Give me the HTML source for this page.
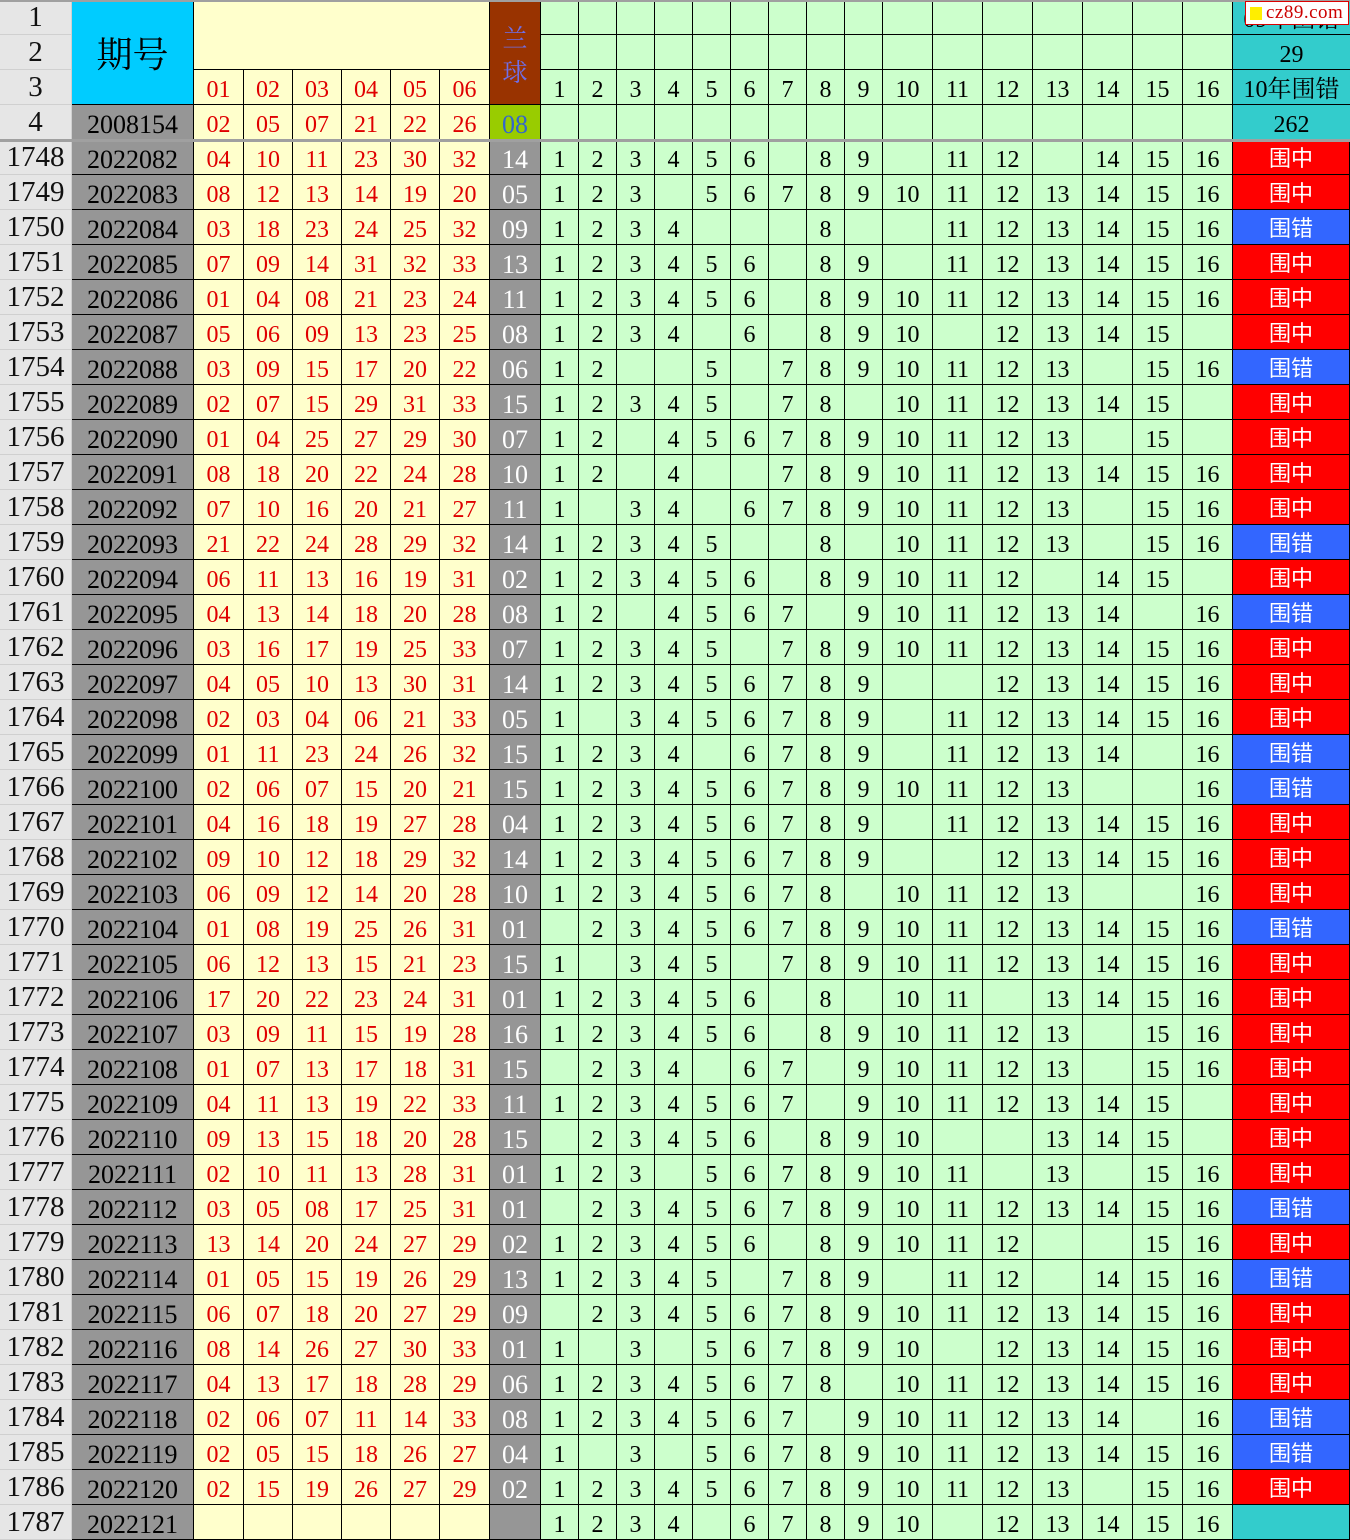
<!DOCTYPE html>
<html><head><meta charset="utf-8"><style>
*{margin:0;padding:0;box-sizing:border-box}
body{width:1350px;height:1540px;overflow:hidden;background:#fff;font-family:"Liberation Serif","Noto Serif CJK SC",serif;position:relative}
.r{display:grid;grid-template-columns:72px 122px 50px 49px 49px 49px 49px 50px 51px repeat(9,38px) repeat(7,50px) 117px;height:35px}
.r>*{display:block;height:35px;border-right:1px solid #000;border-bottom:1px solid #000;text-align:center;font-size:24px;line-height:40px;font-style:normal;font-weight:normal;text-decoration:none;color:#000;overflow:hidden;white-space:nowrap}
s{background:#e6e6e6;border-color:#d0d0d0 !important;font-size:29px !important;line-height:35px !important;color:#111 !important}
u{background:#969696;font-size:26px !important}
i{background:#ffffcc;color:#e00000 !important}
em{background:#969696;color:#fff !important;font-size:26px !important}
a{background:#ccffcc}
b{color:#fff !important;font-family:"Noto Sans CJK SC","Liberation Sans",sans-serif;font-size:22px !important;line-height:34px !important}
b.z{background:#ff0000}
b.c{background:#3366ff}
b.t,.t{background:#33cccc}
.abs{position:absolute}
</style></head><body>
<div class="r"><s>1</s><u></u><i></i><i></i><i></i><i></i><i></i><i></i><em></em><a></a><a></a><a></a><a></a><a></a><a></a><a></a><a></a><a></a><a></a><a></a><a></a><a></a><a></a><a></a><a></a><b class="t"></b></div>
<div class="r"><s>2</s><u></u><i></i><i></i><i></i><i></i><i></i><i></i><em></em><a></a><a></a><a></a><a></a><a></a><a></a><a></a><a></a><a></a><a></a><a></a><a></a><a></a><a></a><a></a><a></a><b class="t"></b></div>
<div class="r"><s>3</s><u></u><i>01</i><i>02</i><i>03</i><i>04</i><i>05</i><i>06</i><em></em><a>1</a><a>2</a><a>3</a><a>4</a><a>5</a><a>6</a><a>7</a><a>8</a><a>9</a><a>10</a><a>11</a><a>12</a><a>13</a><a>14</a><a>15</a><a>16</a><b class="t"></b></div>
<div class="r"><s>4</s><u>2008154</u><i>02</i><i>05</i><i>07</i><i>21</i><i>22</i><i>26</i><em style="background:#99cc00;color:#3366cc !important">08</em><a></a><a></a><a></a><a></a><a></a><a></a><a></a><a></a><a></a><a></a><a></a><a></a><a></a><a></a><a></a><a></a><b class="t"></b></div>
<div class="r"><s>1748</s><u>2022082</u><i>04</i><i>10</i><i>11</i><i>23</i><i>30</i><i>32</i><em>14</em><a>1</a><a>2</a><a>3</a><a>4</a><a>5</a><a>6</a><a></a><a>8</a><a>9</a><a></a><a>11</a><a>12</a><a></a><a>14</a><a>15</a><a>16</a><b class="z">围中</b></div>
<div class="r"><s>1749</s><u>2022083</u><i>08</i><i>12</i><i>13</i><i>14</i><i>19</i><i>20</i><em>05</em><a>1</a><a>2</a><a>3</a><a></a><a>5</a><a>6</a><a>7</a><a>8</a><a>9</a><a>10</a><a>11</a><a>12</a><a>13</a><a>14</a><a>15</a><a>16</a><b class="z">围中</b></div>
<div class="r"><s>1750</s><u>2022084</u><i>03</i><i>18</i><i>23</i><i>24</i><i>25</i><i>32</i><em>09</em><a>1</a><a>2</a><a>3</a><a>4</a><a></a><a></a><a></a><a>8</a><a></a><a></a><a>11</a><a>12</a><a>13</a><a>14</a><a>15</a><a>16</a><b class="c">围错</b></div>
<div class="r"><s>1751</s><u>2022085</u><i>07</i><i>09</i><i>14</i><i>31</i><i>32</i><i>33</i><em>13</em><a>1</a><a>2</a><a>3</a><a>4</a><a>5</a><a>6</a><a></a><a>8</a><a>9</a><a></a><a>11</a><a>12</a><a>13</a><a>14</a><a>15</a><a>16</a><b class="z">围中</b></div>
<div class="r"><s>1752</s><u>2022086</u><i>01</i><i>04</i><i>08</i><i>21</i><i>23</i><i>24</i><em>11</em><a>1</a><a>2</a><a>3</a><a>4</a><a>5</a><a>6</a><a></a><a>8</a><a>9</a><a>10</a><a>11</a><a>12</a><a>13</a><a>14</a><a>15</a><a>16</a><b class="z">围中</b></div>
<div class="r"><s>1753</s><u>2022087</u><i>05</i><i>06</i><i>09</i><i>13</i><i>23</i><i>25</i><em>08</em><a>1</a><a>2</a><a>3</a><a>4</a><a></a><a>6</a><a></a><a>8</a><a>9</a><a>10</a><a></a><a>12</a><a>13</a><a>14</a><a>15</a><a></a><b class="z">围中</b></div>
<div class="r"><s>1754</s><u>2022088</u><i>03</i><i>09</i><i>15</i><i>17</i><i>20</i><i>22</i><em>06</em><a>1</a><a>2</a><a></a><a></a><a>5</a><a></a><a>7</a><a>8</a><a>9</a><a>10</a><a>11</a><a>12</a><a>13</a><a></a><a>15</a><a>16</a><b class="c">围错</b></div>
<div class="r"><s>1755</s><u>2022089</u><i>02</i><i>07</i><i>15</i><i>29</i><i>31</i><i>33</i><em>15</em><a>1</a><a>2</a><a>3</a><a>4</a><a>5</a><a></a><a>7</a><a>8</a><a></a><a>10</a><a>11</a><a>12</a><a>13</a><a>14</a><a>15</a><a></a><b class="z">围中</b></div>
<div class="r"><s>1756</s><u>2022090</u><i>01</i><i>04</i><i>25</i><i>27</i><i>29</i><i>30</i><em>07</em><a>1</a><a>2</a><a></a><a>4</a><a>5</a><a>6</a><a>7</a><a>8</a><a>9</a><a>10</a><a>11</a><a>12</a><a>13</a><a></a><a>15</a><a></a><b class="z">围中</b></div>
<div class="r"><s>1757</s><u>2022091</u><i>08</i><i>18</i><i>20</i><i>22</i><i>24</i><i>28</i><em>10</em><a>1</a><a>2</a><a></a><a>4</a><a></a><a></a><a>7</a><a>8</a><a>9</a><a>10</a><a>11</a><a>12</a><a>13</a><a>14</a><a>15</a><a>16</a><b class="z">围中</b></div>
<div class="r"><s>1758</s><u>2022092</u><i>07</i><i>10</i><i>16</i><i>20</i><i>21</i><i>27</i><em>11</em><a>1</a><a></a><a>3</a><a>4</a><a></a><a>6</a><a>7</a><a>8</a><a>9</a><a>10</a><a>11</a><a>12</a><a>13</a><a></a><a>15</a><a>16</a><b class="z">围中</b></div>
<div class="r"><s>1759</s><u>2022093</u><i>21</i><i>22</i><i>24</i><i>28</i><i>29</i><i>32</i><em>14</em><a>1</a><a>2</a><a>3</a><a>4</a><a>5</a><a></a><a></a><a>8</a><a></a><a>10</a><a>11</a><a>12</a><a>13</a><a></a><a>15</a><a>16</a><b class="c">围错</b></div>
<div class="r"><s>1760</s><u>2022094</u><i>06</i><i>11</i><i>13</i><i>16</i><i>19</i><i>31</i><em>02</em><a>1</a><a>2</a><a>3</a><a>4</a><a>5</a><a>6</a><a></a><a>8</a><a>9</a><a>10</a><a>11</a><a>12</a><a></a><a>14</a><a>15</a><a></a><b class="z">围中</b></div>
<div class="r"><s>1761</s><u>2022095</u><i>04</i><i>13</i><i>14</i><i>18</i><i>20</i><i>28</i><em>08</em><a>1</a><a>2</a><a></a><a>4</a><a>5</a><a>6</a><a>7</a><a></a><a>9</a><a>10</a><a>11</a><a>12</a><a>13</a><a>14</a><a></a><a>16</a><b class="c">围错</b></div>
<div class="r"><s>1762</s><u>2022096</u><i>03</i><i>16</i><i>17</i><i>19</i><i>25</i><i>33</i><em>07</em><a>1</a><a>2</a><a>3</a><a>4</a><a>5</a><a></a><a>7</a><a>8</a><a>9</a><a>10</a><a>11</a><a>12</a><a>13</a><a>14</a><a>15</a><a>16</a><b class="z">围中</b></div>
<div class="r"><s>1763</s><u>2022097</u><i>04</i><i>05</i><i>10</i><i>13</i><i>30</i><i>31</i><em>14</em><a>1</a><a>2</a><a>3</a><a>4</a><a>5</a><a>6</a><a>7</a><a>8</a><a>9</a><a></a><a></a><a>12</a><a>13</a><a>14</a><a>15</a><a>16</a><b class="z">围中</b></div>
<div class="r"><s>1764</s><u>2022098</u><i>02</i><i>03</i><i>04</i><i>06</i><i>21</i><i>33</i><em>05</em><a>1</a><a></a><a>3</a><a>4</a><a>5</a><a>6</a><a>7</a><a>8</a><a>9</a><a></a><a>11</a><a>12</a><a>13</a><a>14</a><a>15</a><a>16</a><b class="z">围中</b></div>
<div class="r"><s>1765</s><u>2022099</u><i>01</i><i>11</i><i>23</i><i>24</i><i>26</i><i>32</i><em>15</em><a>1</a><a>2</a><a>3</a><a>4</a><a></a><a>6</a><a>7</a><a>8</a><a>9</a><a></a><a>11</a><a>12</a><a>13</a><a>14</a><a></a><a>16</a><b class="c">围错</b></div>
<div class="r"><s>1766</s><u>2022100</u><i>02</i><i>06</i><i>07</i><i>15</i><i>20</i><i>21</i><em>15</em><a>1</a><a>2</a><a>3</a><a>4</a><a>5</a><a>6</a><a>7</a><a>8</a><a>9</a><a>10</a><a>11</a><a>12</a><a>13</a><a></a><a></a><a>16</a><b class="c">围错</b></div>
<div class="r"><s>1767</s><u>2022101</u><i>04</i><i>16</i><i>18</i><i>19</i><i>27</i><i>28</i><em>04</em><a>1</a><a>2</a><a>3</a><a>4</a><a>5</a><a>6</a><a>7</a><a>8</a><a>9</a><a></a><a>11</a><a>12</a><a>13</a><a>14</a><a>15</a><a>16</a><b class="z">围中</b></div>
<div class="r"><s>1768</s><u>2022102</u><i>09</i><i>10</i><i>12</i><i>18</i><i>29</i><i>32</i><em>14</em><a>1</a><a>2</a><a>3</a><a>4</a><a>5</a><a>6</a><a>7</a><a>8</a><a>9</a><a></a><a></a><a>12</a><a>13</a><a>14</a><a>15</a><a>16</a><b class="z">围中</b></div>
<div class="r"><s>1769</s><u>2022103</u><i>06</i><i>09</i><i>12</i><i>14</i><i>20</i><i>28</i><em>10</em><a>1</a><a>2</a><a>3</a><a>4</a><a>5</a><a>6</a><a>7</a><a>8</a><a></a><a>10</a><a>11</a><a>12</a><a>13</a><a></a><a></a><a>16</a><b class="z">围中</b></div>
<div class="r"><s>1770</s><u>2022104</u><i>01</i><i>08</i><i>19</i><i>25</i><i>26</i><i>31</i><em>01</em><a></a><a>2</a><a>3</a><a>4</a><a>5</a><a>6</a><a>7</a><a>8</a><a>9</a><a>10</a><a>11</a><a>12</a><a>13</a><a>14</a><a>15</a><a>16</a><b class="c">围错</b></div>
<div class="r"><s>1771</s><u>2022105</u><i>06</i><i>12</i><i>13</i><i>15</i><i>21</i><i>23</i><em>15</em><a>1</a><a></a><a>3</a><a>4</a><a>5</a><a></a><a>7</a><a>8</a><a>9</a><a>10</a><a>11</a><a>12</a><a>13</a><a>14</a><a>15</a><a>16</a><b class="z">围中</b></div>
<div class="r"><s>1772</s><u>2022106</u><i>17</i><i>20</i><i>22</i><i>23</i><i>24</i><i>31</i><em>01</em><a>1</a><a>2</a><a>3</a><a>4</a><a>5</a><a>6</a><a></a><a>8</a><a></a><a>10</a><a>11</a><a></a><a>13</a><a>14</a><a>15</a><a>16</a><b class="z">围中</b></div>
<div class="r"><s>1773</s><u>2022107</u><i>03</i><i>09</i><i>11</i><i>15</i><i>19</i><i>28</i><em>16</em><a>1</a><a>2</a><a>3</a><a>4</a><a>5</a><a>6</a><a></a><a>8</a><a>9</a><a>10</a><a>11</a><a>12</a><a>13</a><a></a><a>15</a><a>16</a><b class="z">围中</b></div>
<div class="r"><s>1774</s><u>2022108</u><i>01</i><i>07</i><i>13</i><i>17</i><i>18</i><i>31</i><em>15</em><a></a><a>2</a><a>3</a><a>4</a><a></a><a>6</a><a>7</a><a></a><a>9</a><a>10</a><a>11</a><a>12</a><a>13</a><a></a><a>15</a><a>16</a><b class="z">围中</b></div>
<div class="r"><s>1775</s><u>2022109</u><i>04</i><i>11</i><i>13</i><i>19</i><i>22</i><i>33</i><em>11</em><a>1</a><a>2</a><a>3</a><a>4</a><a>5</a><a>6</a><a>7</a><a></a><a>9</a><a>10</a><a>11</a><a>12</a><a>13</a><a>14</a><a>15</a><a></a><b class="z">围中</b></div>
<div class="r"><s>1776</s><u>2022110</u><i>09</i><i>13</i><i>15</i><i>18</i><i>20</i><i>28</i><em>15</em><a></a><a>2</a><a>3</a><a>4</a><a>5</a><a>6</a><a></a><a>8</a><a>9</a><a>10</a><a></a><a></a><a>13</a><a>14</a><a>15</a><a></a><b class="z">围中</b></div>
<div class="r"><s>1777</s><u>2022111</u><i>02</i><i>10</i><i>11</i><i>13</i><i>28</i><i>31</i><em>01</em><a>1</a><a>2</a><a>3</a><a></a><a>5</a><a>6</a><a>7</a><a>8</a><a>9</a><a>10</a><a>11</a><a></a><a>13</a><a></a><a>15</a><a>16</a><b class="z">围中</b></div>
<div class="r"><s>1778</s><u>2022112</u><i>03</i><i>05</i><i>08</i><i>17</i><i>25</i><i>31</i><em>01</em><a></a><a>2</a><a>3</a><a>4</a><a>5</a><a>6</a><a>7</a><a>8</a><a>9</a><a>10</a><a>11</a><a>12</a><a>13</a><a>14</a><a>15</a><a>16</a><b class="c">围错</b></div>
<div class="r"><s>1779</s><u>2022113</u><i>13</i><i>14</i><i>20</i><i>24</i><i>27</i><i>29</i><em>02</em><a>1</a><a>2</a><a>3</a><a>4</a><a>5</a><a>6</a><a></a><a>8</a><a>9</a><a>10</a><a>11</a><a>12</a><a></a><a></a><a>15</a><a>16</a><b class="z">围中</b></div>
<div class="r"><s>1780</s><u>2022114</u><i>01</i><i>05</i><i>15</i><i>19</i><i>26</i><i>29</i><em>13</em><a>1</a><a>2</a><a>3</a><a>4</a><a>5</a><a></a><a>7</a><a>8</a><a>9</a><a></a><a>11</a><a>12</a><a></a><a>14</a><a>15</a><a>16</a><b class="c">围错</b></div>
<div class="r"><s>1781</s><u>2022115</u><i>06</i><i>07</i><i>18</i><i>20</i><i>27</i><i>29</i><em>09</em><a></a><a>2</a><a>3</a><a>4</a><a>5</a><a>6</a><a>7</a><a>8</a><a>9</a><a>10</a><a>11</a><a>12</a><a>13</a><a>14</a><a>15</a><a>16</a><b class="z">围中</b></div>
<div class="r"><s>1782</s><u>2022116</u><i>08</i><i>14</i><i>26</i><i>27</i><i>30</i><i>33</i><em>01</em><a>1</a><a></a><a>3</a><a></a><a>5</a><a>6</a><a>7</a><a>8</a><a>9</a><a>10</a><a></a><a>12</a><a>13</a><a>14</a><a>15</a><a>16</a><b class="z">围中</b></div>
<div class="r"><s>1783</s><u>2022117</u><i>04</i><i>13</i><i>17</i><i>18</i><i>28</i><i>29</i><em>06</em><a>1</a><a>2</a><a>3</a><a>4</a><a>5</a><a>6</a><a>7</a><a>8</a><a></a><a>10</a><a>11</a><a>12</a><a>13</a><a>14</a><a>15</a><a>16</a><b class="z">围中</b></div>
<div class="r"><s>1784</s><u>2022118</u><i>02</i><i>06</i><i>07</i><i>11</i><i>14</i><i>33</i><em>08</em><a>1</a><a>2</a><a>3</a><a>4</a><a>5</a><a>6</a><a>7</a><a></a><a>9</a><a>10</a><a>11</a><a>12</a><a>13</a><a>14</a><a></a><a>16</a><b class="c">围错</b></div>
<div class="r"><s>1785</s><u>2022119</u><i>02</i><i>05</i><i>15</i><i>18</i><i>26</i><i>27</i><em>04</em><a>1</a><a></a><a>3</a><a></a><a>5</a><a>6</a><a>7</a><a>8</a><a>9</a><a>10</a><a>11</a><a>12</a><a>13</a><a>14</a><a>15</a><a>16</a><b class="c">围错</b></div>
<div class="r"><s>1786</s><u>2022120</u><i>02</i><i>15</i><i>19</i><i>26</i><i>27</i><i>29</i><em>02</em><a>1</a><a>2</a><a>3</a><a>4</a><a>5</a><a>6</a><a>7</a><a>8</a><a>9</a><a>10</a><a>11</a><a>12</a><a>13</a><a></a><a>15</a><a>16</a><b class="z">围中</b></div>
<div class="r"><s>1787</s><u>2022121</u><i></i><i></i><i></i><i></i><i></i><i></i><em></em><a>1</a><a>2</a><a>3</a><a>4</a><a></a><a>6</a><a>7</a><a>8</a><a>9</a><a>10</a><a></a><a>12</a><a>13</a><a>14</a><a>15</a><a>16</a><b class="t"></b></div>

<div class="abs" style="left:72px;top:0;width:122px;height:105px;background:#00ccff;border-right:1px solid #000;border-bottom:1px solid #000;font-family:'Noto Serif CJK SC',serif;font-size:36px;line-height:105px;text-align:center;color:#000">期号</div>
<div class="abs" style="left:194px;top:0;width:296px;height:70px;background:#ffffcc;border-right:1px solid #000;border-bottom:1px solid #000"></div>
<div class="abs" style="left:490px;top:0;width:51px;height:105px;background:#993300;border-right:1px solid #000;border-bottom:1px solid #000;font-family:'Noto Serif CJK SC',serif;font-size:25px;line-height:34px;text-align:center;color:#6f6fe8;padding-top:20px">兰<br>球</div>
<div class="abs t" style="left:1233px;top:0;width:117px;height:35px;border-bottom:1px solid #000;font-family:'Liberation Serif','Noto Serif CJK SC',serif;font-size:24px;line-height:40px;text-align:center;color:#000;overflow:hidden">09年围错</div>
<div class="abs t" style="left:1233px;top:35px;width:117px;height:35px;border-bottom:1px solid #000;font-size:24px;line-height:40px;text-align:center;color:#000">29</div>
<div class="abs t" style="left:1233px;top:70px;width:117px;height:35px;border-bottom:1px solid #000;font-family:'Liberation Serif','Noto Serif CJK SC',serif;font-size:24px;line-height:40px;text-align:center;color:#000">10年围错</div>
<div class="abs t" style="left:1233px;top:105px;width:117px;height:35px;font-size:24px;line-height:40px;text-align:center;color:#000">262</div>
<div class="abs" style="left:0;top:139px;width:1350px;height:3px;background:#a0a0a0"></div>
<div class="abs" style="left:0;top:0;width:1350px;height:2px;background:#a0a0a0"></div>
<div class="abs" style="left:1245px;top:1px;width:104px;height:24px;background:#fff;border:1px solid #d00;font-family:'Liberation Serif',serif;font-size:19px;line-height:22px;color:#c00;padding-left:20px;letter-spacing:0.5px">cz89.com<span style="position:absolute;left:4px;top:5px;width:12px;height:13px;background:#ffee00"></span></div>
</body></html>
